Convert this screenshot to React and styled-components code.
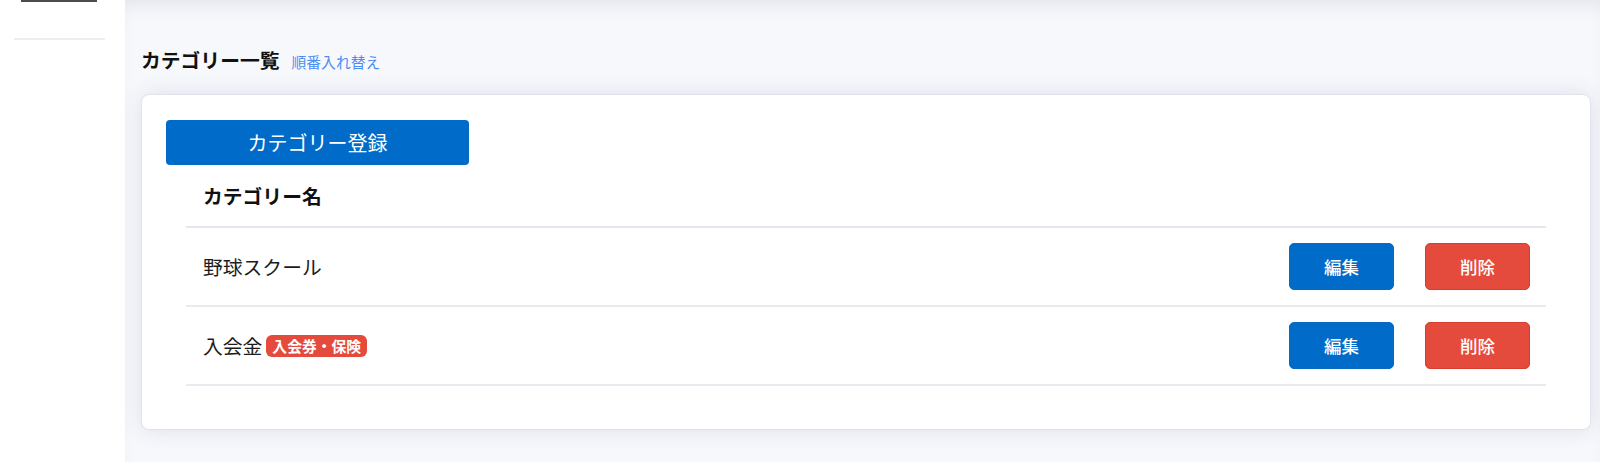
import React from "react";
import styled, { createGlobalStyle } from "styled-components";

const GlobalStyle = createGlobalStyle`
  html, body { margin: 0; padding: 0; }
  body {
    font-family: "Noto Sans CJK JP", "Noto Sans", sans-serif;
    background: #f7f8fc;
    color: #1a1a1a;
  }
  * { box-sizing: border-box; }
`;

const Layout = styled.div`
  display: flex;
  min-height: 100vh;
`;

const Sidebar = styled.aside`
  width: 125px;
  flex-shrink: 0;
  background: #ffffff;
  display: flex;
  flex-direction: column;
`;

const ActiveUnderline = styled.div`
  margin-left: 21px;
  width: 76px;
  height: 2px;
  background: #4d4d4d;
`;

const SideDivider = styled.div`
  margin: 36px 0 0 14px;
  width: 91px;
  height: 2px;
  background: #eeeeee;
`;

const Main = styled.main`
  flex: 1;
  padding: 44px 9px 30px 16px;
  background: #f7f8fc;
  box-shadow: inset 0 14px 22px -12px rgba(40, 50, 100, 0.12);
`;

const TitleRow = styled.div`
  display: flex;
  align-items: baseline;
  gap: 12px;
  height: 32px;
  line-height: 32px;
  margin-bottom: 18px;
`;

const Title = styled.h2`
  margin: 0;
  font-size: 19.8px;
  font-weight: 700;
  color: #111;
`;

const TextLink = styled.a`
  font-size: 14.8px;
  color: #4b8ef2;
  text-decoration: none;
  cursor: pointer;
`;

const Card = styled.section`
  background: #fff;
  border: 1px solid #e1e3ec;
  border-radius: 8px;
  box-shadow: 0 0 22px rgba(40, 50, 110, 0.12);
  padding: 25px 24px 24px;
`;

const PrimaryButton = styled.button`
  display: block;
  width: 303px;
  height: 45px;
  border: none;
  border-radius: 4px;
  background: #006bc9;
  color: #fff;
  font-family: inherit;
  font-size: 20px;
  font-weight: 400;
  cursor: pointer;
`;

const Table = styled.div`
  margin: 0 20px 19px;
`;

const HeaderRow = styled.div`
  height: 63px;
  display: flex;
  align-items: center;
  padding: 0 17px;
  border-bottom: 2px solid #e4e7f0;
`;

const HeaderCell = styled.div`
  font-size: 19.8px;
  font-weight: 700;
  color: #111;
`;

const Row = styled.div`
  height: 79px;
  display: flex;
  align-items: center;
  padding: 0 16px 0 17px;
  border-bottom: 2px solid #e9ebf1;
`;

const NameCell = styled.div`
  flex: 1;
  display: flex;
  align-items: center;
  font-size: 19.8px;
  color: #1c1c1c;
`;

const Badge = styled.span`
  margin-left: 4px;
  display: inline-flex;
  align-items: center;
  height: 22px;
  padding: 0 6px;
  border-radius: 6px;
  background: #e54b3c;
  color: #fff;
  font-size: 14.8px;
  font-weight: 700;
`;

const Actions = styled.div`
  display: flex;
  gap: 31px;
`;

const ActionButton = styled.button`
  width: 105px;
  height: 47px;
  border-radius: 5px;
  border: 1px solid ${(p) => (p.$danger ? "#d93d2e" : "#0a69c2")};
  background: ${(p) => (p.$danger ? "#e54b3c" : "#006bc9")};
  color: #fff;
  font-family: inherit;
  font-size: 17.5px;
  font-weight: 500;
  cursor: pointer;
`;

const categories = [
  { name: "野球スクール" },
  { name: "入会金", badge: "入会券・保険" },
];

export default function App() {
  return (
    <>
      <GlobalStyle />
      <Layout>
        <Sidebar>
          <ActiveUnderline />
          <SideDivider />
        </Sidebar>
        <Main>
          <TitleRow>
            <Title>カテゴリー一覧</Title>
            <TextLink>順番入れ替え</TextLink>
          </TitleRow>
          <Card>
            <PrimaryButton>カテゴリー登録</PrimaryButton>
            <Table>
              <HeaderRow>
                <HeaderCell>カテゴリー名</HeaderCell>
              </HeaderRow>
              {categories.map((c) => (
                <Row key={c.name}>
                  <NameCell>
                    {c.name}
                    {c.badge && <Badge>{c.badge}</Badge>}
                  </NameCell>
                  <Actions>
                    <ActionButton>編集</ActionButton>
                    <ActionButton $danger>削除</ActionButton>
                  </Actions>
                </Row>
              ))}
            </Table>
          </Card>
        </Main>
      </Layout>
    </>
  );
}
